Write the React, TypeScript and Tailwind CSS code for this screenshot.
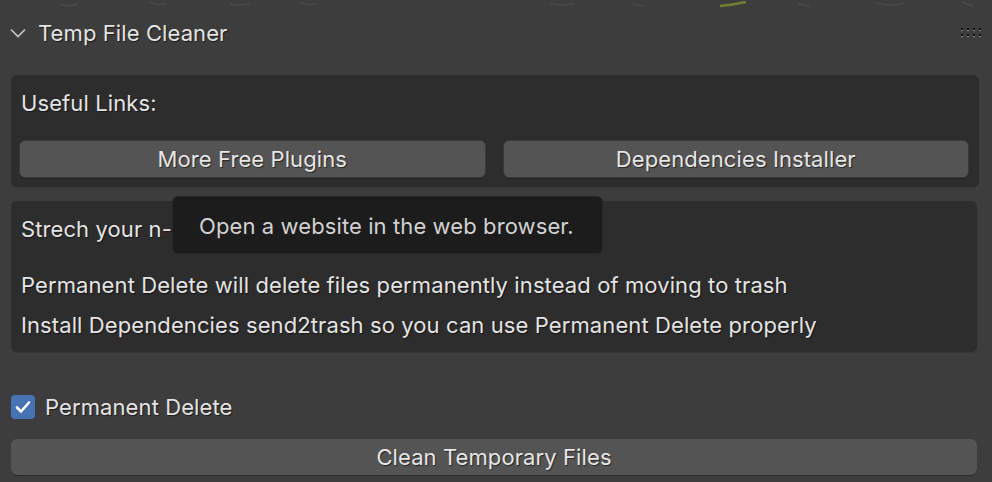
import React from "react";

const shadow = "[text-shadow:1px_1px_1px_rgba(0,0,0,0.55)]";

function Grip() {
  const xs = [0, 6, 12, 18];
  return (
    <svg width="22" height="10" viewBox="0 0 22 10" className="shrink-0">
      {[0, 6].map((y) =>
        xs.map((x) => (
          <g key={`${x}-${y}`}>
            <rect x={x} y={y + 1} width="2" height="2" fill="#8a8a8a" />
            <rect x={x} y={y} width="2" height="2" fill="#101010" />
          </g>
        ))
      )}
    </svg>
  );
}

export default function App() {
  return (
    <div
      className="w-[992px] h-[482px] bg-[#3d3d3d] overflow-hidden relative text-[#e4e4e4] text-[22px] tracking-[0.1px]"
      style={{ fontFamily: "Inter, 'Noto Sans', sans-serif" }}
    >
      {/* viewport texture peeking at the top */}
      <svg className="absolute top-0 left-0" width="992" height="10" viewBox="0 0 992 10">
        <path d="M60 4 q8 3 18 0" stroke="#474747" strokeWidth="2" fill="none" />
        <path d="M150 2 q8 4 16 1" stroke="#474747" strokeWidth="2" fill="none" />
        <path d="M230 4 q10 3 20 -1" stroke="#474747" strokeWidth="2" fill="none" />
        <path d="M300 2 q8 4 16 2" stroke="#474747" strokeWidth="2" fill="none" />
        <path d="M550 3 q12 4 24 0" stroke="#474747" strokeWidth="2" fill="none" />
        <path d="M632 3 q6 3 12 3" stroke="#474747" strokeWidth="2" fill="none" />
        <path d="M720 6 q12 -1 26 -4" stroke="#6f7f36" strokeWidth="2.5" fill="none" />
        <path d="M798 3 q6 3 12 3" stroke="#474747" strokeWidth="2" fill="none" />
        <path d="M876 3 q14 4 28 0" stroke="#474747" strokeWidth="2" fill="none" />
        <path d="M962 2 q6 3 12 4" stroke="#474747" strokeWidth="2" fill="none" />
      </svg>

      {/* Panel header */}
      <div className="h-[66px] flex items-center pl-[10px] pr-[9px]">
        <svg width="16" height="10" viewBox="0 0 16 10" className="shrink-0">
          <path d="M1 1.5 L8 8.5 L15 1.5" stroke="#c8c8c8" strokeWidth="1.6" fill="none" />
        </svg>
        <span className={`ml-[12px] flex-1 ${shadow}`}>Temp File Cleaner</span>
        <Grip />
      </div>

      {/* Useful links box */}
      <div className="mt-[9px] ml-[11px] w-[968px] h-[112px] rounded-[6px] bg-[#2d2d2d] shadow-[0_1px_0_#363636] flex flex-col">
        <div className={`h-[56px] flex items-center pl-[10px] ${shadow}`}>Useful Links:</div>
        <div className="mt-[9px] pl-[8px] pr-[10px] flex gap-[17px]">
          <button className={`flex-1 h-[38px] rounded-[6px] bg-[#545454] border border-[#3a3a3a] shadow-[0_1px_0_#222] text-[#e6e6e6] ${shadow}`}>
            More Free Plugins
          </button>
          <button className={`flex-1 h-[38px] rounded-[6px] bg-[#545454] border border-[#3a3a3a] shadow-[0_1px_0_#222] text-[#e6e6e6] ${shadow}`}>
            Dependencies Installer
          </button>
        </div>
      </div>

      {/* Info box */}
      <div className={`mt-[14px] ml-[11px] w-[966px] h-[151px] rounded-[6px] bg-[#2d2d2d] shadow-[0_1px_0_#363636] pl-[10px] ${shadow}`}>
        <div className="h-[56px] flex items-center whitespace-nowrap">Strech your n-panel to read the full text</div>
        <div className="mt-[8px] h-[40px] flex items-center whitespace-nowrap">
          Permanent Delete will delete files permanently instead of moving to trash
        </div>
        <div className="h-[40px] flex items-center whitespace-nowrap">
          Install Dependencies send2trash so you can use Permanent Delete properly
        </div>
      </div>

      {/* Checkbox row */}
      <div className="mt-[43px] ml-[11px] h-[24px] flex items-center gap-[10px]">
        <span className="w-[24px] h-[24px] rounded-[4px] bg-[#4772b3] flex items-center justify-center">
          <svg width="16" height="14" viewBox="0 0 16 14">
            <path d="M2 7.5 L6 11.5 L14 2.5" stroke="#ffffff" strokeWidth="2.6" fill="none" strokeLinecap="round" strokeLinejoin="round" />
          </svg>
        </span>
        <span className={shadow}>Permanent Delete</span>
      </div>

      {/* Clean button */}
      <button className={`mt-[20px] ml-[11px] w-[966px] h-[36px] rounded-[6px] bg-[#545454] shadow-[0_1px_0_#2a2a2a] text-[#e6e6e6] ${shadow}`}>
        Clean Temporary Files
      </button>

      {/* Tooltip */}
      <div className="absolute left-[172px] top-[196px] w-[431px] h-[58px] rounded-[6px] bg-[#1c1c1c] border border-[#262626] flex items-center pt-[3px] pl-[26px] text-[#d2d2d2]">
        Open a website in the web browser.
      </div>
    </div>
  );
}
